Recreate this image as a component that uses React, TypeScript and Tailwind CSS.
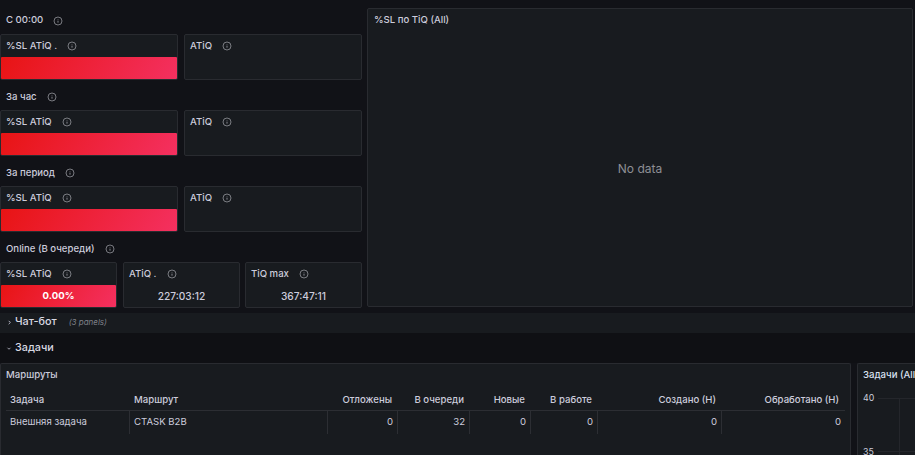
const font = "font-['Inter','Liberation_Sans',sans-serif]"

function InfoIcon({ className = '' }: { className?: string }) {
  return (
    <svg viewBox="0 0 12 12" className={`h-[10px] w-[10px] shrink-0 text-[#9a9ca3] ${className}`} fill="none" stroke="currentColor">
      <circle cx="6" cy="6" r="4.8" strokeWidth="0.9" />
      <path d="M6 5.6v2.4M6 3.7v.6" strokeWidth="1" />
    </svg>
  )
}

function SectionHead({ title, h }: { title: string; h: string }) {
  return (
    <div className={`flex items-center pl-[6px] text-[9.6px] font-medium text-[#ccccdc] ${h}`}>
      <span>{title}</span>
      <InfoIcon className="ml-[10px]" />
    </div>
  )
}

function Panel({ title, value, red, className = '' }: { title: string; value?: string; red?: boolean; className?: string }) {
  return (
    <div className={`flex h-[46px] min-w-0 flex-1 flex-col rounded-[2px] border border-[#292b30] bg-[#181b1f] ${className}`}>
      <div className="flex h-[22px] shrink-0 items-center pl-[5px] text-[9.6px] font-medium text-[#ccccdc]">
        <span>{title}</span>
        <InfoIcon className="ml-[10px]" />
      </div>
      {red ? (
        <div className="flex flex-1 items-center justify-center rounded-[1px] bg-[linear-gradient(120deg,#e81414,#f43060)] pt-[1px] text-[9.6px] font-bold text-white">
          {value}
        </div>
      ) : (
        <div className="flex flex-1 items-center justify-center pt-[1px] text-[10.2px] font-medium text-[#ccccdc]">{value}</div>
      )}
    </div>
  )
}

const columns = [
  { label: 'Задача', value: 'Внешняя задача', w: 'w-[124px]', left: true },
  { label: 'Маршрут', value: 'CTASK B2B', w: 'w-[198px]', left: true },
  { label: 'Отложены', value: '0', w: 'w-[70px]' },
  { label: 'В очереди', value: '32', w: 'w-[72px]' },
  { label: 'Новые', value: '0', w: 'w-[61px]' },
  { label: 'В работе', value: '0', w: 'w-[67px]' },
  { label: 'Создано (Н)', value: '0', w: 'w-[124px]' },
  { label: 'Обработано (Н)', value: '0', w: 'w-[123px]' },
]

export default function App() {
  return (
    <div className={`flex h-[455px] w-[915px] flex-col overflow-hidden bg-[#111217] ${font}`}>
      <div className="flex pt-[8px]">
        <div className="flex w-[362px] shrink-0 flex-col">
          <SectionHead title="С 00:00" h="h-[25px] mb-[1px]" />
          <div className="flex gap-[6px]">
            <Panel title="%SL ATiQ ." red />
            <Panel title="ATiQ" />
          </div>
          <SectionHead title="За час" h="h-[30px] pt-[4px]" />
          <div className="flex gap-[6px]">
            <Panel title="%SL ATiQ" red />
            <Panel title="ATiQ" />
          </div>
          <SectionHead title="За период" h="h-[30px] pt-[4px]" />
          <div className="flex gap-[6px]">
            <Panel title="%SL ATiQ" red />
            <Panel title="ATiQ" />
          </div>
          <SectionHead title="Online (В очереди)" h="h-[30px] pt-[4px]" />
          <div className="flex">
            <Panel title="%SL ATiQ" value="0.00%" red />
            <Panel title="ATiQ ." value="227:03:12" className="ml-[6px]" />
            <Panel title="TiQ max" value="367:47:11" className="ml-[5px]" />
          </div>
        </div>
        <div className="ml-[5px] mr-[2px] flex h-[299px] flex-1 flex-col rounded-[2px] border border-[#292b30] bg-[#181b1f]">
          <div className="flex h-[22px] items-center pl-[6px] text-[9.6px] font-medium text-[#ccccdc]">%SL по TiQ (All)</div>
          <div className="flex flex-1 items-center justify-center text-[12px] text-[#8e8f94]">No data</div>
        </div>
      </div>

      <div className="mt-[5px] flex h-[20px] items-center bg-[#181b1f] pb-[2px] pl-[7px]">
        <svg viewBox="0 0 6 8" className="h-[7px] w-[5px] text-[#ccccdc]" fill="none" stroke="currentColor" strokeWidth="1">
          <path d="M2 2l2 2-2 2" />
        </svg>
        <span className="ml-[3px] text-[10.8px] font-medium text-[#d8d9e2]">Чат-бот</span>
        <span className="ml-[12px] text-[8px] italic text-[#7e8088]">(3 panels)</span>
      </div>

      <div className="flex h-[30px] items-center bg-[#0f1014] pl-[6px] pt-[1px]">
        <svg viewBox="0 0 8 6" className="h-[5px] w-[6px] text-[#ccccdc]" fill="none" stroke="currentColor" strokeWidth="1">
          <path d="M2 2l2 2 2-2" />
        </svg>
        <span className="ml-[3px] text-[10.8px] font-medium text-[#d8d9e2]">Задачи</span>
      </div>

      <div className="flex min-h-0 flex-1 gap-[6px]">
        <div className="w-[851px] shrink-0 rounded-t-[2px] border border-b-0 border-[#292b30] bg-[#181b1f] px-[5px]">
          <div className="flex h-[22px] items-center text-[9.6px] font-medium text-[#ccccdc]">Маршруты</div>
          <div className="mt-[4px] flex h-[21px] border-b border-[#2c2e33] text-[9.6px] font-medium text-[#ccccdc]">
            {columns.map(c => (
              <div key={c.label} className={`flex items-center ${c.w} ${c.left ? 'justify-start pl-[4px]' : 'justify-end pr-[6px]'}`}>
                {c.label}
              </div>
            ))}
          </div>
          <div className="flex h-[23px] text-[9.6px] text-[#ccccdc]">
            {columns.map((c, i) => (
              <div
                key={c.label}
                className={`flex items-center ${c.w} ${c.left ? 'justify-start pl-[4px]' : 'justify-end pr-[4px]'} ${i < 7 ? 'border-r border-[#2c2e33]' : ''}`}
              >
                {c.value}
              </div>
            ))}
          </div>
        </div>
        <div className="flex-1 rounded-tl-[2px] border-l border-t border-[#292b30] bg-[#181b1f] pl-[5px]">
          <div className="flex h-[22px] items-center whitespace-nowrap text-[9.6px] font-medium text-[#d8e0f0]">Задачи (All)</div>
          <div className="flex">
            <div className="w-[15px] shrink-0 text-[8.8px] text-[#ccccdc]">
              <div className="flex h-[24px] items-center">40</div>
              <div className="mt-[30px] flex h-[24px] items-center">35</div>
            </div>
            <svg className="h-[78px] flex-1" stroke="#24262b" strokeWidth="1">
              <line x1="0" y1="12.5" x2="60" y2="12.5" />
              <line x1="0" y1="65.5" x2="60" y2="65.5" />
              <line x1="21.5" y1="12" x2="21.5" y2="78" />
            </svg>
          </div>
        </div>
      </div>
    </div>
  )
}
